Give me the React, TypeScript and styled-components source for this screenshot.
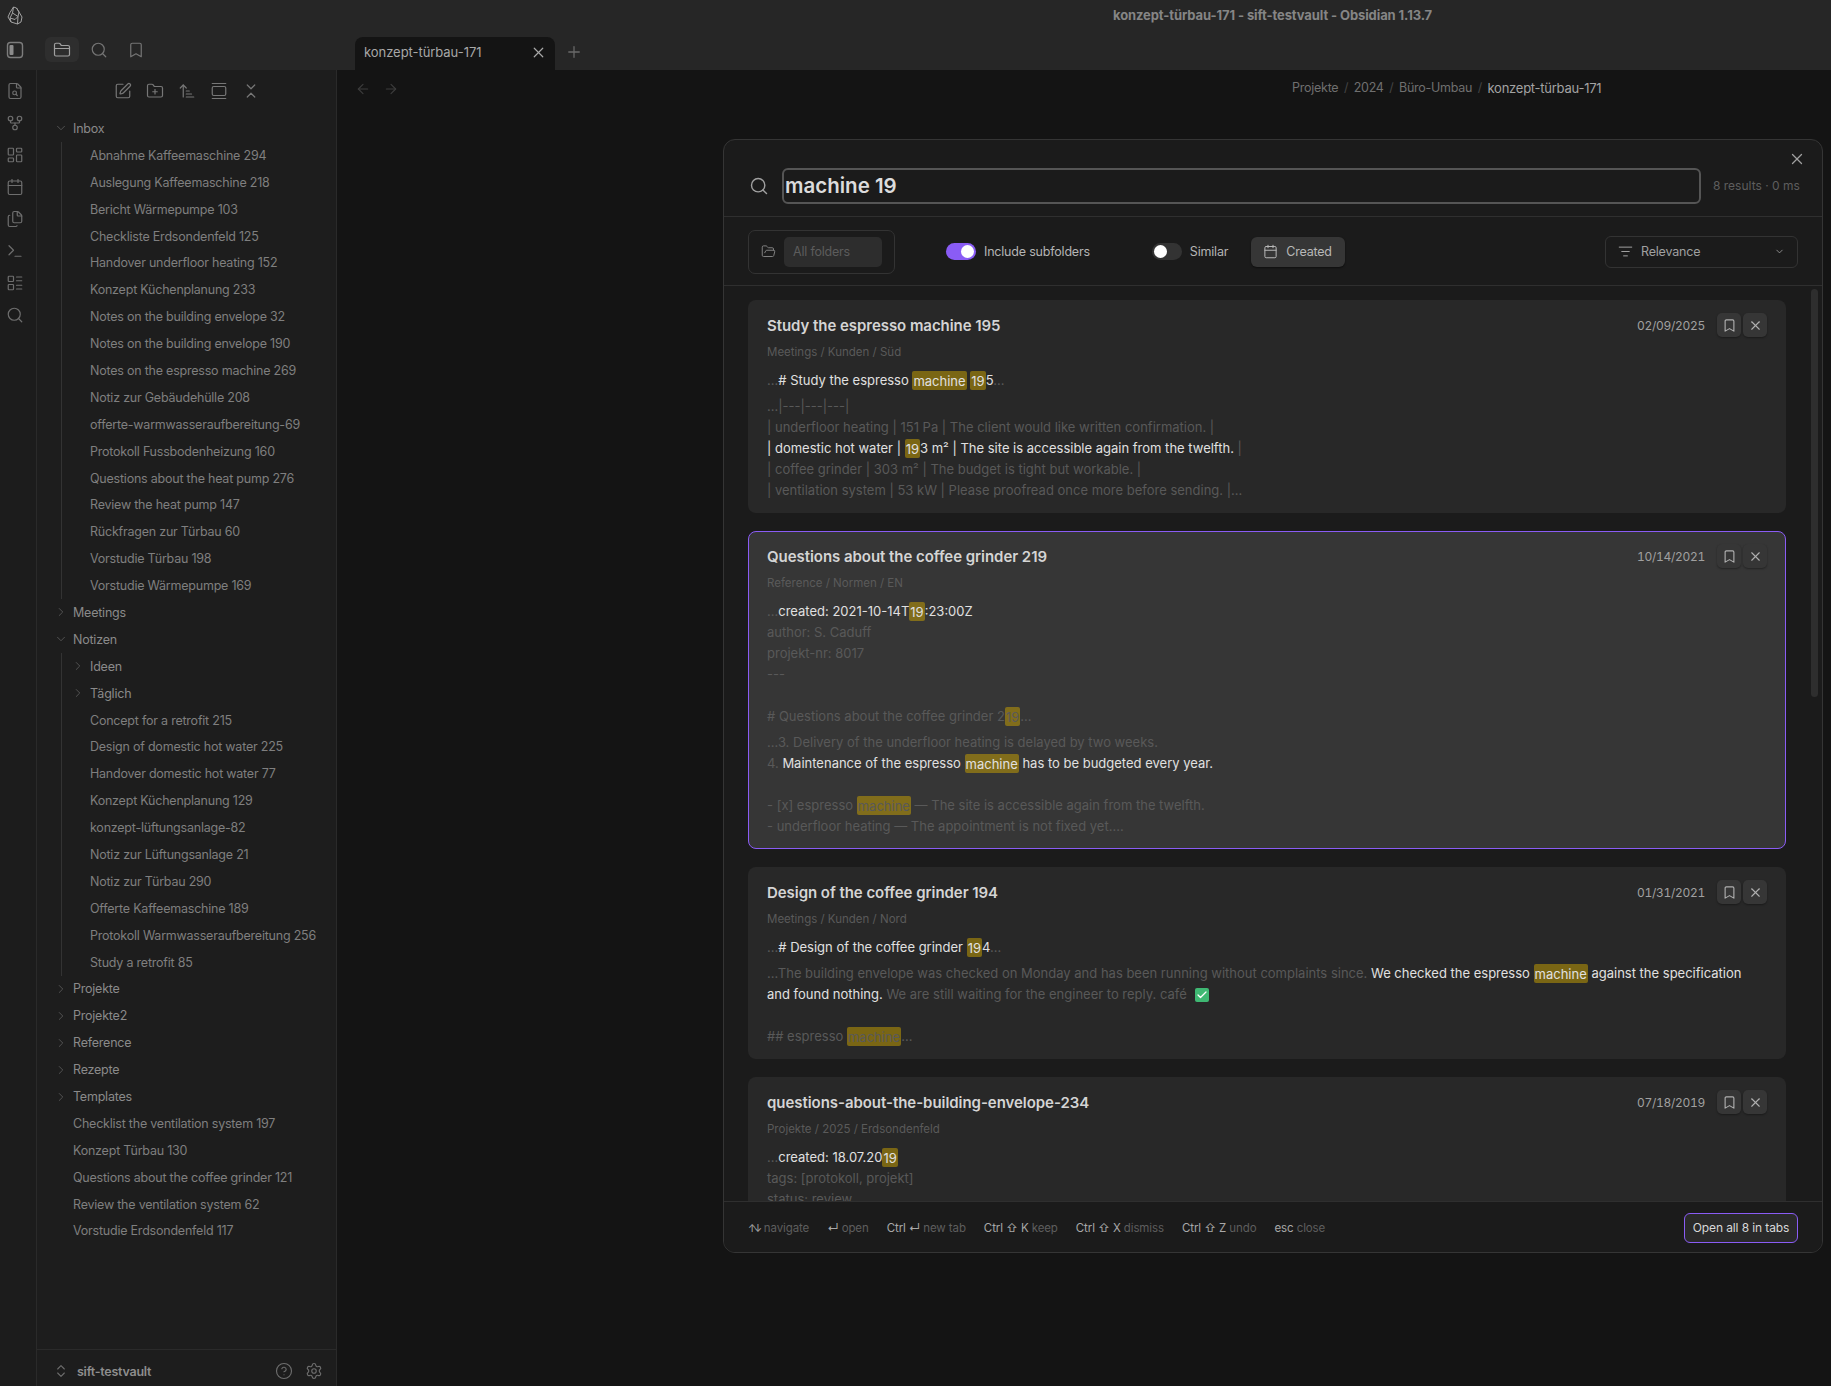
import { FunctionComponent, ReactNode } from 'react';
import styled, { createGlobalStyle } from 'styled-components';
import {
    ArrowLeft,
    ArrowRight,
    ArrowUpNarrowWide,
    Bookmark,
    Calendar,
    Check,
    ChevronDown,
    ChevronRight,
    ChevronsDownUp,
    ChevronsUpDown,
    CircleHelp,
    Files,
    FileSearch,
    FolderClosed,
    FolderOpen,
    FolderPlus,
    GalleryVertical,
    GitFork,
    LayoutDashboard,
    LayoutList,
    ListFilter,
    Plus,
    Search,
    Settings,
    SquarePen,
    Terminal,
    X,
} from 'lucide-react';

const GlobalStyle = createGlobalStyle`
    html, body {
        margin: 0;
        padding: 0;
        background: #141414;
    }
    * {
        box-sizing: border-box;
    }
`;

const Shell = styled.div`
    position: relative;
    display: flex;
    flex-direction: column;
    width: 1831px;
    height: 1386px;
    overflow: hidden;
    font-family: Inter, 'Liberation Sans', sans-serif;
    font-size: 13px;
    color: #aaa;
    background: #141414;
`;

const TitleBar = styled.div`
    display: flex;
    align-items: center;
    flex: none;
    height: 37px;
    padding: 0 0 7px 7px;
    background: #262626;
`;

const WindowTitle = styled.div`
    margin-left: 1090px;
    font-size: 13px;
    font-weight: 700;
    letter-spacing: -0.1px;
    color: #858585;
    white-space: nowrap;
`;

const TabRow = styled.div`
    display: flex;
    flex: none;
    height: 33px;
    background: #262626;
`;

const SideTabs = styled.div`
    display: flex;
    align-items: flex-start;
    gap: 3px;
    width: 337px;
    padding-left: 6px;
    color: #7c7c7c;
`;

const ToggleSlot = styled.div`
    display: flex;
    align-items: center;
    height: 25px;
    margin-right: 18px;
`;

const SideTab = styled.div<{ $active?: boolean }>`
    display: flex;
    align-items: center;
    justify-content: center;
    width: 34px;
    height: 25px;
    border-radius: 6px;
    color: ${props => (props.$active ? '#a0a0a0' : '#757575')};
    background: ${props => (props.$active ? '#2e2e2e' : 'transparent')};
`;

const Tab = styled.div`
    display: flex;
    align-items: center;
    justify-content: space-between;
    width: 200px;
    height: 33px;
    margin-left: 18px;
    padding: 0 8px 3px 9px;
    border-radius: 8px 8px 0 0;
    background: #141414;
    color: #a8a8a8;
    font-size: 13px;
    letter-spacing: -0.05px;
    white-space: nowrap;
`;

const NewTab = styled.div`
    display: flex;
    align-items: center;
    height: 33px;
    margin-left: 10px;
    padding-bottom: 4px;
    color: #6a6a6a;
`;

const Body = styled.div`
    display: flex;
    flex: 1;
    min-height: 0;
`;

const Ribbon = styled.nav`
    display: flex;
    flex-direction: column;
    align-items: center;
    gap: 14px;
    flex: none;
    width: 37px;
    padding: 12px 7px 0 1px;
    border-right: 1px solid #2a2a2a;
    background: #1c1c1c;
    color: #6e6e6e;
`;

const Sidebar = styled.aside`
    display: flex;
    flex-direction: column;
    flex: none;
    width: 300px;
    border-right: 1px solid #2a2a2a;
    background: #1d1d1d;
`;

const NavHeader = styled.div`
    display: flex;
    justify-content: center;
    gap: 14px;
    flex: none;
    height: 45px;
    padding-top: 12px;
    color: #777;
`;

const Tree = styled.div`
    flex: 1;
    min-height: 0;
    overflow: hidden;
`;

const Row = styled.div<{ $indent: number; $folder?: boolean }>`
    display: flex;
    align-items: center;
    height: 26.9px;
    padding-left: ${props => props.$indent}px;
    font-size: 12.5px;
    letter-spacing: -0.22px;
    color: ${props => (props.$folder ? '#8a8a8a' : '#7f7f7f')};
    white-space: nowrap;
`;

const Caret = styled.span`
    display: flex;
    align-items: center;
    justify-content: center;
    flex: none;
    width: 14px;
    margin-right: 5px;
    color: #555;
`;

const Children = styled.div`
    margin-left: 24px;
    border-left: 1px solid #333;
`;

const VaultBar = styled.div`
    display: flex;
    align-items: center;
    flex: none;
    height: 37px;
    padding: 6px 13px 0 16px;
    border-top: 1px solid #2a2a2a;
    color: #6e6e6e;
`;

const VaultName = styled.div`
    flex: 1;
    margin-left: 8px;
    font-size: 12.5px;
    font-weight: 600;
    letter-spacing: -0.25px;
    color: #8e8e8e;
`;

const VaultIcons = styled.div`
    display: flex;
    gap: 12px;
`;

const Main = styled.main`
    flex: 1;
    background: #141414;
`;

const ViewHeader = styled.div`
    display: flex;
    align-items: center;
    height: 36px;
    padding-left: 18px;
    color: #3c3c3c;
`;

const Arrows = styled.div`
    display: flex;
    gap: 12px;
    margin-top: 2px;
`;

const Breadcrumb = styled.div`
    display: flex;
    gap: 5.5px;
    margin-left: 893px;
    font-size: 12.5px;
    letter-spacing: -0.25px;
    color: #6f6f6f;
    white-space: nowrap;
`;

const CrumbSep = styled.span`
    color: #444;
`;

const CrumbCurrent = styled.span`
    font-size: 13px;
    color: #a3a3a3;
`;

const Modal = styled.section`
    position: absolute;
    top: 139px;
    left: 723px;
    display: flex;
    flex-direction: column;
    width: 1100px;
    height: 1114px;
    overflow: hidden;
    border: 1px solid #353535;
    border-radius: 12px;
    background: #1b1b1b;
`;

const ModalClose = styled.div`
    position: absolute;
    top: 10px;
    right: 16px;
    display: flex;
    color: #a0a0a0;
`;

const SearchRow = styled.div`
    display: flex;
    align-items: center;
    flex: none;
    height: 77px;
    padding: 27px 20px 12px 25px;
    border-bottom: 1px solid #2f2f2f;
    color: #a0a0a0;
`;

const SearchGlyph = styled(Search)`
    flex: none;
`;

const QueryBox = styled.div`
    display: flex;
    align-items: center;
    flex: none;
    width: 919px;
    height: 36px;
    margin-left: 13px;
    padding-left: 1px;
    border: 2px solid #555;
    border-radius: 6px;
    font-size: 20.5px;
    font-weight: 600;
    color: #dcdcdc;
`;

const ResultCount = styled.div`
    margin-left: 12px;
    font-size: 12px;
    color: #5e5e5e;
    white-space: nowrap;
`;

const FilterRow = styled.div`
    display: flex;
    align-items: center;
    flex: none;
    height: 69px;
    padding: 1px 24px 0;
    border-bottom: 1px solid #2f2f2f;
    font-size: 12.5px;
    letter-spacing: -0.2px;
`;

const FolderGroup = styled.div`
    display: flex;
    align-items: center;
    width: 147px;
    height: 44px;
    padding-left: 12px;
    border: 1px solid #333;
    border-radius: 7px;
    color: #808080;
`;

const FolderInput = styled.div`
    display: flex;
    align-items: center;
    width: 98px;
    height: 30px;
    margin-left: 8px;
    padding-left: 9px;
    border-radius: 5px;
    background: #2d2d2d;
    color: #5c5c5c;
`;

const ToggleTrack = styled.div<{ $on?: boolean }>`
    display: flex;
    align-items: center;
    justify-content: ${props => (props.$on ? 'flex-end' : 'flex-start')};
    width: 30px;
    height: 17px;
    padding: 0 2px;
    border-radius: 9px;
    background: ${props => (props.$on ? '#8a5cf5' : '#333')};
`;

const ToggleKnob = styled.div`
    width: 13px;
    height: 13px;
    border-radius: 50%;
    background: #fff;
`;

const ToggleLabel = styled.span`
    margin-left: 8px;
    color: #b4b4b4;
    white-space: nowrap;
`;

const FirstToggle = styled.div`
    display: flex;
    align-items: center;
    margin-left: 51px;
`;

const SecondToggle = styled.div`
    display: flex;
    align-items: center;
    margin-left: 62px;
`;

const DateButton = styled.div`
    display: flex;
    align-items: center;
    gap: 8px;
    width: 94px;
    height: 30px;
    margin-left: 23px;
    padding-left: 12px;
    border-radius: 6px;
    background: #363636;
    box-shadow: 0 1px 2px rgba(0, 0, 0, 0.5);
    color: #b8b8b8;
`;

const SortSelect = styled.div`
    display: flex;
    align-items: center;
    width: 193px;
    height: 32px;
    margin-left: auto;
    padding: 0 12px;
    border: 1px solid #333;
    border-radius: 6px;
    color: #a0a0a0;
`;

const SortLabel = styled.span`
    flex: 1;
    margin-left: 8px;
`;

const Results = styled.div`
    position: relative;
    display: flex;
    flex-direction: column;
    gap: 18px;
    flex: 1;
    min-height: 0;
    padding: 14px 36px 0 24px;
    overflow: hidden;
`;

const ScrollThumb = styled.div`
    position: absolute;
    top: 3px;
    right: 4px;
    width: 7px;
    height: 408px;
    border-radius: 4px;
    background: #2e2e2e;
`;

const Card = styled.article<{ $active?: boolean }>`
    flex: none;
    padding: ${props => (props.$active ? '12px 18px 11px' : '13px 19px 12px')};
    border: ${props => (props.$active ? '1px solid #8a5cf5' : 'none')};
    border-radius: 8px;
    background: ${props => (props.$active ? '#363636' : '#282828')};
`;

const CardHead = styled.div`
    display: flex;
    align-items: center;
    height: 24px;
`;

const CardTitle = styled.h3`
    flex: 1;
    margin: 0;
    font-size: 15px;
    font-weight: 600;
    letter-spacing: -0.05px;
    color: #d4d4d4;
`;

const CardDate = styled.span`
    margin-right: 10px;
    font-size: 12px;
    font-variant-numeric: tabular-nums;
    letter-spacing: -0.3px;
    color: #a0a0a0;
`;

const CardAction = styled.div`
    display: flex;
    align-items: center;
    justify-content: center;
    width: 24px;
    height: 24px;
    margin-left: 2px;
    border-radius: 5px;
    background: #363636;
    box-shadow: 0 1px 2px rgba(0, 0, 0, 0.35);
    color: #b0b0b0;
`;

const CardPath = styled.div`
    height: 16px;
    margin: 7px 0 10px;
    font-size: 11.5px;
    line-height: 16px;
    color: #5a5a5a;
`;

const Snippet = styled.div`
    margin-top: 5px;
`;

const Line = styled.div`
    min-height: 21px;
    font-size: 13px;
    line-height: 21px;
    color: #595959;
    white-space: pre-wrap;
`;

const Bright = styled.span`
    color: #e0e0e0;
`;

const Hit = styled.mark`
    padding: 1.5px 1px;
    border-radius: 2px;
    background: rgba(204, 163, 0, 0.5);
    color: inherit;
`;

const DoneBox = styled.span`
    display: inline-flex;
    align-items: center;
    justify-content: center;
    width: 14px;
    height: 14px;
    margin-left: 8px;
    vertical-align: -2px;
    border-radius: 2px;
    background: #3fb873;
    color: #fff;
`;

const Footer = styled.footer`
    display: flex;
    align-items: center;
    flex: none;
    height: 51px;
    padding: 1px 24px 0;
    border-top: 1px solid #2f2f2f;
    background: #1b1b1b;
`;

const Hints = styled.div`
    display: flex;
    gap: 18px;
    flex: 1;
`;

const Hint = styled.span`
    font-size: 11.5px;
    letter-spacing: -0.1px;
    color: #5e5e5e;
    white-space: nowrap;
`;

const HintKey = styled.span`
    color: #a8a8a8;
`;

const ArrowKeys = styled(HintKey)`
    font-size: 10px;
    letter-spacing: -2.5px;
    margin-right: 1px;
`;

const OpenAll = styled.div`
    display: flex;
    align-items: center;
    justify-content: center;
    width: 114px;
    height: 30px;
    border: 1px solid #8a5cf5;
    border-radius: 6px;
    background: #2a2a2a;
    font-size: 12px;
    letter-spacing: -0.1px;
    color: #d8d8d8;
`;

const ObsidianLogo: FunctionComponent = () => (
    <svg width="16" height="19" viewBox="0 0 16 19" fill="none" stroke="#a2a2a2" strokeWidth="1" strokeLinejoin="round">
        <path d="M6.5 1 L3 6.5 L1 11 L4 16 L10.5 18 L14 16 L15 11 L12 6 L9.5 2 Z" />
        <path d="M6.5 1 L5.5 7 L3 12 L4 16 M5.5 7 L11 10.5 L10.5 18 M9.5 2 L12 6 L11 10.5 M3 12 L8 13.5 L11 10.5" />
    </svg>
);

const SidebarToggle: FunctionComponent = () => (
    <svg width="18" height="18" viewBox="0 0 18 18" fill="none">
        <rect x="1.5" y="1.5" width="15" height="15" rx="3" stroke="#7c7c7c" strokeWidth="1.4" />
        <rect x="3.5" y="4" width="4" height="10" rx="1" fill="#8c8c8c" />
    </svg>
);

const RootFile: FunctionComponent<{ name: string }> = ({ name }) => <Row $indent={36}>{name}</Row>;

const ClosedFolder: FunctionComponent<{ name: string }> = ({ name }) => (
    <Row $indent={17} $folder>
        <Caret><ChevronRight size={18} strokeWidth={1.6} /></Caret>
        {name}
    </Row>
);

const inboxFiles = [
    'Abnahme Kaffeemaschine 294',
    'Auslegung Kaffeemaschine 218',
    'Bericht Wärmepumpe 103',
    'Checkliste Erdsondenfeld 125',
    'Handover underfloor heating 152',
    'Konzept Küchenplanung 233',
    'Notes on the building envelope 32',
    'Notes on the building envelope 190',
    'Notes on the espresso machine 269',
    'Notiz zur Gebäudehülle 208',
    'offerte-warmwasseraufbereitung-69',
    'Protokoll Fussbodenheizung 160',
    'Questions about the heat pump 276',
    'Review the heat pump 147',
    'Rückfragen zur Türbau 60',
    'Vorstudie Türbau 198',
    'Vorstudie Wärmepumpe 169',
];

const notizenFiles = [
    'Concept for a retrofit 215',
    'Design of domestic hot water 225',
    'Handover domestic hot water 77',
    'Konzept Küchenplanung 129',
    'konzept-lüftungsanlage-82',
    'Notiz zur Lüftungsanlage 21',
    'Notiz zur Türbau 290',
    'Offerte Kaffeemaschine 189',
    'Protokoll Warmwasseraufbereitung 256',
    'Study a retrofit 85',
];

const closedFolders = ['Projekte', 'Projekte2', 'Reference', 'Rezepte', 'Templates'];

const rootFiles = [
    'Checklist the ventilation system 197',
    'Konzept Türbau 130',
    'Questions about the coffee grinder 121',
    'Review the ventilation system 62',
    'Vorstudie Erdsondenfeld 117',
];

const FileTree: FunctionComponent = () => (
    <Tree>
        <Row $indent={17} $folder>
            <Caret><ChevronDown size={18} strokeWidth={1.6} /></Caret>
            Inbox
        </Row>
        <Children>
            {inboxFiles.map(name => <Row key={name} $indent={28}>{name}</Row>)}
        </Children>
        <ClosedFolder name="Meetings" />
        <Row $indent={17} $folder>
            <Caret><ChevronDown size={18} strokeWidth={1.6} /></Caret>
            Notizen
        </Row>
        <Children>
            <Row $indent={9} $folder>
                <Caret><ChevronRight size={18} strokeWidth={1.6} /></Caret>
                Ideen
            </Row>
            <Row $indent={9} $folder>
                <Caret><ChevronRight size={18} strokeWidth={1.6} /></Caret>
                Täglich
            </Row>
            {notizenFiles.map(name => <Row key={name} $indent={28}>{name}</Row>)}
        </Children>
        {closedFolders.map(name => <ClosedFolder key={name} name={name} />)}
        {rootFiles.map(name => <RootFile key={name} name={name} />)}
    </Tree>
);

const ResultCard: FunctionComponent<{
    title: string;
    path: string;
    date: string;
    active?: boolean;
    children: ReactNode;
}> = ({ title, path, date, active, children }) => (
    <Card $active={active}>
        <CardHead>
            <CardTitle>{title}</CardTitle>
            <CardDate>{date}</CardDate>
            <CardAction><Bookmark size={15} strokeWidth={1.8} /></CardAction>
            <CardAction><X size={15} strokeWidth={1.8} /></CardAction>
        </CardHead>
        <CardPath>{path}</CardPath>
        {children}
    </Card>
);

const Key: FunctionComponent<{ keys: string; label: string }> = ({ keys, label }) => (
    <Hint><HintKey>{keys}</HintKey> {label}</Hint>
);

const App: FunctionComponent = () => (
    <Shell>
        <GlobalStyle />
        <TitleBar>
            <ObsidianLogo />
            <WindowTitle>konzept-türbau-171 - sift-testvault - Obsidian 1.13.7</WindowTitle>
        </TitleBar>
        <TabRow>
            <SideTabs>
                <ToggleSlot><SidebarToggle /></ToggleSlot>
                <SideTab $active><FolderClosed size={18} strokeWidth={1.6} /></SideTab>
                <SideTab><Search size={18} strokeWidth={1.6} /></SideTab>
                <SideTab><Bookmark size={18} strokeWidth={1.6} /></SideTab>
            </SideTabs>
            <Tab>
                konzept-türbau-171
                <X size={17} strokeWidth={1.7} />
            </Tab>
            <NewTab><Plus size={18} strokeWidth={1.7} /></NewTab>
        </TabRow>
        <Body>
            <Ribbon>
                <FileSearch size={18} strokeWidth={1.6} />
                <GitFork size={18} strokeWidth={1.6} />
                <LayoutDashboard size={18} strokeWidth={1.6} />
                <Calendar size={18} strokeWidth={1.6} />
                <Files size={18} strokeWidth={1.6} />
                <Terminal size={18} strokeWidth={1.6} />
                <LayoutList size={18} strokeWidth={1.6} />
                <Search size={18} strokeWidth={1.6} />
            </Ribbon>
            <Sidebar>
                <NavHeader>
                    <SquarePen size={18} strokeWidth={1.6} />
                    <FolderPlus size={18} strokeWidth={1.6} />
                    <ArrowUpNarrowWide size={18} strokeWidth={1.6} />
                    <GalleryVertical size={18} strokeWidth={1.6} />
                    <ChevronsDownUp size={18} strokeWidth={1.6} />
                </NavHeader>
                <FileTree />
                <VaultBar>
                    <ChevronsUpDown size={16} strokeWidth={1.6} />
                    <VaultName>sift-testvault</VaultName>
                    <VaultIcons>
                        <CircleHelp size={18} strokeWidth={1.5} />
                        <Settings size={18} strokeWidth={1.5} />
                    </VaultIcons>
                </VaultBar>
            </Sidebar>
            <Main>
                <ViewHeader>
                    <Arrows>
                        <ArrowLeft size={16} strokeWidth={1.7} />
                        <ArrowRight size={16} strokeWidth={1.7} />
                    </Arrows>
                    <Breadcrumb>
                        Projekte <CrumbSep>/</CrumbSep> 2024 <CrumbSep>/</CrumbSep> Büro-Umbau <CrumbSep>/</CrumbSep>
                        <CrumbCurrent>konzept-türbau-171</CrumbCurrent>
                    </Breadcrumb>
                </ViewHeader>
            </Main>
        </Body>
        <Modal>
            <ModalClose><X size={18} strokeWidth={1.7} /></ModalClose>
            <SearchRow>
                <SearchGlyph size={20} strokeWidth={1.7} />
                <QueryBox>machine 19</QueryBox>
                <ResultCount>8 results · 0 ms</ResultCount>
            </SearchRow>
            <FilterRow>
                <FolderGroup>
                    <FolderOpen size={15} strokeWidth={1.6} />
                    <FolderInput>All folders</FolderInput>
                </FolderGroup>
                <FirstToggle>
                    <ToggleTrack $on><ToggleKnob /></ToggleTrack>
                    <ToggleLabel>Include subfolders</ToggleLabel>
                </FirstToggle>
                <SecondToggle>
                    <ToggleTrack><ToggleKnob /></ToggleTrack>
                    <ToggleLabel>Similar</ToggleLabel>
                </SecondToggle>
                <DateButton>
                    <Calendar size={15} strokeWidth={1.6} />
                    Created
                </DateButton>
                <SortSelect>
                    <ListFilter size={15} strokeWidth={1.6} />
                    <SortLabel>Relevance</SortLabel>
                    <ChevronDown size={11} strokeWidth={1.8} />
                </SortSelect>
            </FilterRow>
            <Results>
                <ScrollThumb />
                <ResultCard title="Study the espresso machine 195" path="Meetings / Kunden / Süd" date="02/09/2025">
                    <Snippet>
                        <Line>...<Bright># Study the espresso <Hit>machine</Hit> <Hit>19</Hit>5</Bright>...</Line>
                    </Snippet>
                    <Snippet>
                        <Line>...|---|---|---|</Line>
                        <Line>| underfloor heating | 151 Pa | The client would like written confirmation. |</Line>
                        <Line><Bright>| domestic hot water | <Hit>19</Hit>3 m² | The site is accessible again from the twelfth.</Bright> |</Line>
                        <Line>| coffee grinder | 303 m² | The budget is tight but workable. |</Line>
                        <Line>| ventilation system | 53 kW | Please proofread once more before sending. |...</Line>
                    </Snippet>
                </ResultCard>
                <ResultCard active title="Questions about the coffee grinder 219" path="Reference / Normen / EN" date="10/14/2021">
                    <Snippet>
                        <Line>...<Bright>created: 2021-10-14T<Hit>19</Hit>:23:00Z</Bright></Line>
                        <Line>author: S. Caduff</Line>
                        <Line>projekt-nr: 8017</Line>
                        <Line>---</Line>
                        <Line />
                        <Line># Questions about the coffee grinder 2<Hit>19</Hit>...</Line>
                    </Snippet>
                    <Snippet>
                        <Line>...3. Delivery of the underfloor heating is delayed by two weeks.</Line>
                        <Line>4. <Bright>Maintenance of the espresso <Hit>machine</Hit> has to be budgeted every year.</Bright></Line>
                        <Line />
                        <Line>- [x] espresso <Hit>machine</Hit> — The site is accessible again from the twelfth.</Line>
                        <Line>- underfloor heating — The appointment is not fixed yet....</Line>
                    </Snippet>
                </ResultCard>
                <ResultCard title="Design of the coffee grinder 194" path="Meetings / Kunden / Nord" date="01/31/2021">
                    <Snippet>
                        <Line>...<Bright># Design of the coffee grinder <Hit>19</Hit>4</Bright>...</Line>
                    </Snippet>
                    <Snippet>
                        <Line>
                            ...The building envelope was checked on Monday and has been running without complaints since. <Bright>We checked the espresso <Hit>machine</Hit> against the specification and found nothing.</Bright> We are still waiting for the engineer to reply. café<DoneBox><Check size={12} strokeWidth={2.5} /></DoneBox>
                        </Line>
                        <Line />
                        <Line>## espresso <Hit>machine</Hit>...</Line>
                    </Snippet>
                </ResultCard>
                <ResultCard title="questions-about-the-building-envelope-234" path="Projekte / 2025 / Erdsondenfeld" date="07/18/2019">
                    <Snippet>
                        <Line>...<Bright>created: 18.07.20<Hit>19</Hit></Bright></Line>
                        <Line>tags: [protokoll, projekt]</Line>
                        <Line>status: review</Line>
                    </Snippet>
                </ResultCard>
            </Results>
            <Footer>
                <Hints>
                    <Hint><ArrowKeys>↑↓</ArrowKeys> navigate</Hint>
                    <Key keys="↵" label="open" />
                    <Key keys="Ctrl ↵" label="new tab" />
                    <Key keys="Ctrl ⇧ K" label="keep" />
                    <Key keys="Ctrl ⇧ X" label="dismiss" />
                    <Key keys="Ctrl ⇧ Z" label="undo" />
                    <Key keys="esc" label="close" />
                </Hints>
                <OpenAll>Open all 8 in tabs</OpenAll>
            </Footer>
        </Modal>
    </Shell>
);

export default App;
